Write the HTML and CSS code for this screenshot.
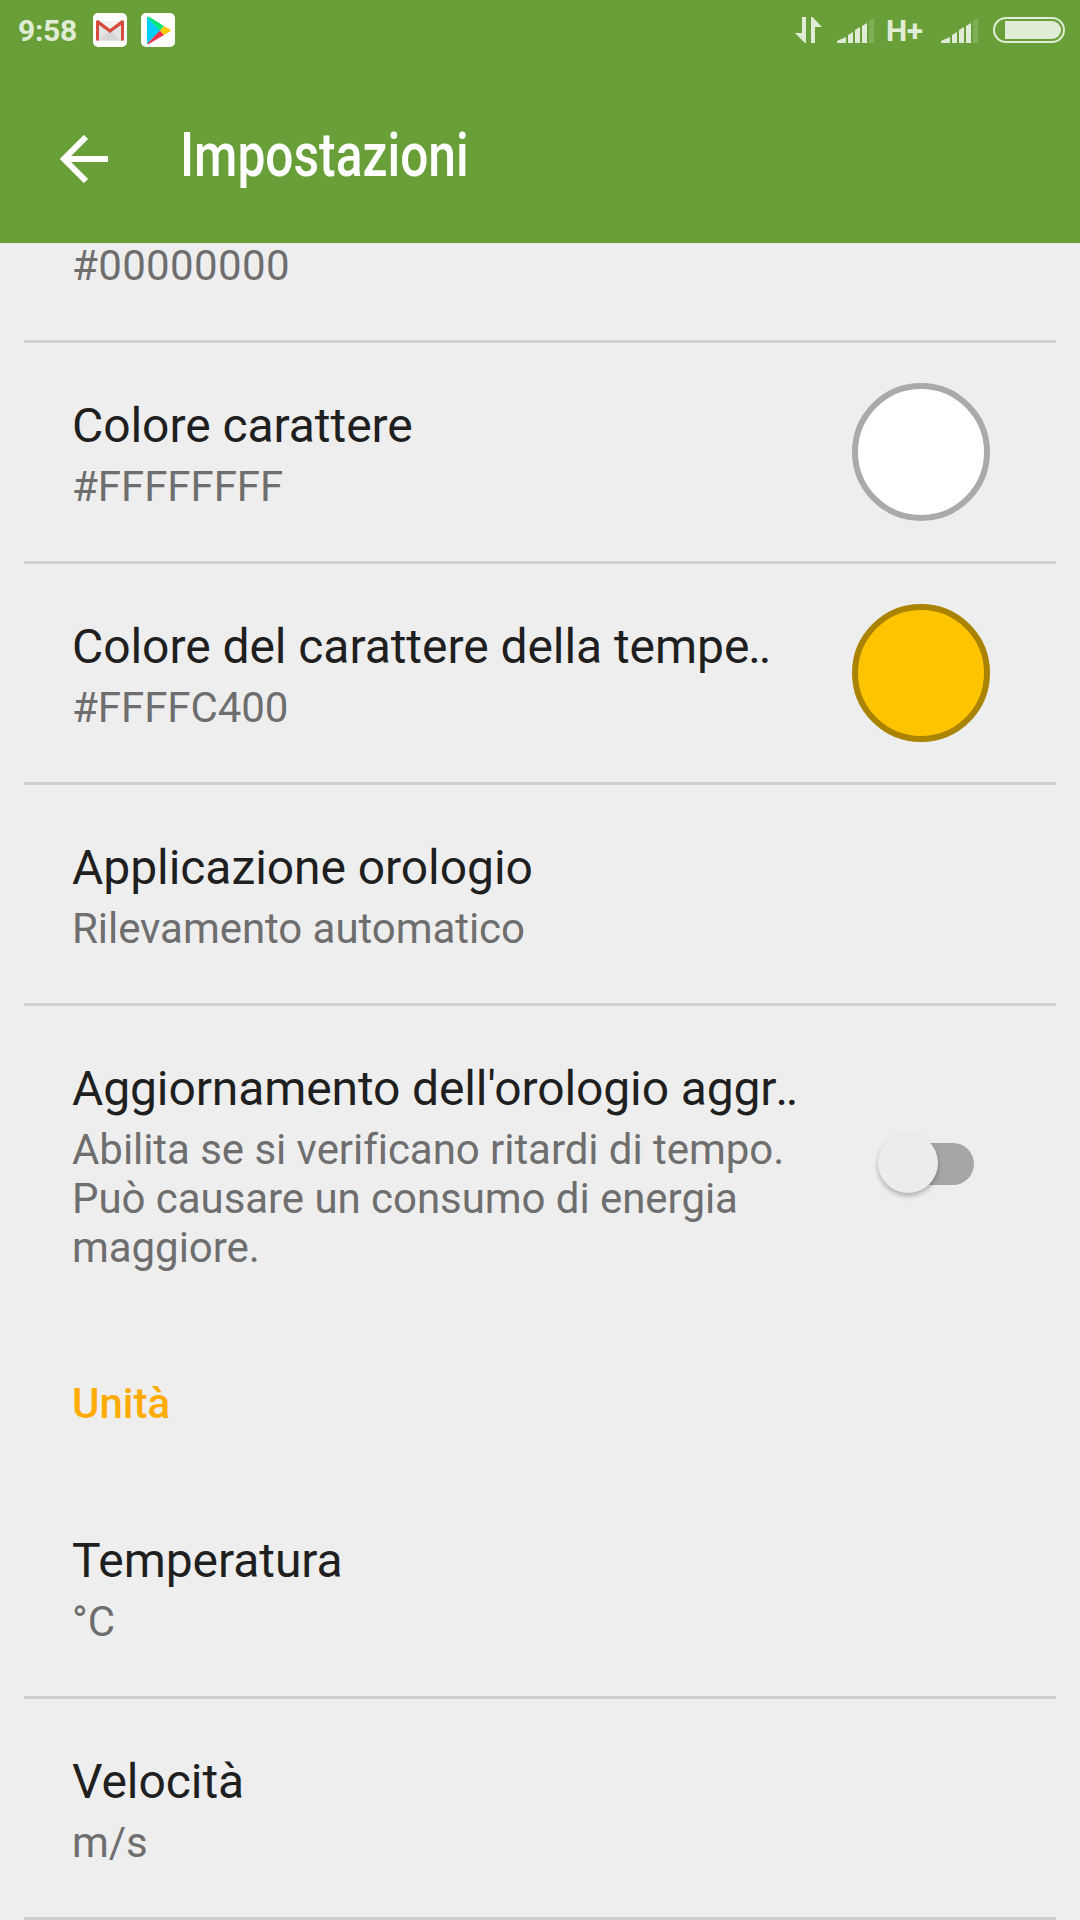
FILE: index.html
```html
<!DOCTYPE html>
<html lang="it">
<head>
    <meta charset="UTF-8">
    <meta name="viewport" content="width=device-width, initial-scale=1.0">
    <title>Impostazioni</title>
    <link rel="stylesheet" href="styles.css">
</head>
<body>
    <header class="app-header">
        <div class="status-bar">
            <div class="status-left">
                <span class="clock">9:58</span>
                <svg class="notification" viewBox="0 0 34 34">
                    <rect width="34" height="34" rx="5" fill="#fff"/>
                    <path d="M4 8h26v20H4z" fill="#e4e4e4"/>
                    <path d="M7 27l10-10 10 10z" fill="#d6d6d6"/>
                    <path d="M7 8h20L17 16z" fill="#f3f3f3"/>
                    <path d="M3 27.500V9q0-2 2-2l12 9 12-9q2 0 2 2v18.500h-3V12l-11 8L6 12v15.500z" fill="#d54b3d"/>
                </svg>
                <svg class="notification" viewBox="0 0 34 34">
                    <rect width="34" height="34" rx="5" fill="#fff"/>
                    <path d="M6 4v27l13.500-13.500z" fill="#00cdfb"/>
                    <path d="M6 4q1-.8 2.500 0L23 13l-4 4.500z" fill="#00e676"/>
                    <path d="M6 31q1 .5 2.500-.5L23 22l-4-4.500z" fill="#f0334b"/>
                    <path d="M23 13l6 3.500q1.500 1 0 2L23 22l-4-4.500z" fill="#ffc900"/>
                </svg>
            </div>
            <div class="status-right">
                <svg class="data-icon" viewBox="0 0 28 26">
                    <path d="M7 0h4v26h-1L0 16h7zM16 0h1.500L27 10h-7v16h-4z" fill="currentColor"/>
                </svg>
                <svg class="signal" viewBox="0 0 37 25">
                    <path d="M0 25v-2l9-4v6zM11 17l5-3v11h-5zM18 12l5-3v16h-5zM25 8l5-3v20h-5z" fill="currentColor"/>
                    <path d="M32 3l5-3v25h-5z" fill="currentColor" opacity=".2"/>
                </svg>
                <span class="network">H+</span>
                <svg class="signal" viewBox="0 0 37 25">
                    <path d="M0 25v-2l9-4v6zM11 17l5-3v11h-5zM18 12l5-3v16h-5zM25 8l5-3v20h-5z" fill="currentColor"/>
                    <path d="M32 3l5-3v25h-5z" fill="currentColor" opacity=".2"/>
                </svg>
                <svg class="battery" viewBox="0 0 72 26">
                    <rect x="1" y="1" width="70" height="24" rx="12" fill="none" stroke="currentColor" stroke-width="2"/>
                    <path d="M12 4h47a9 9 0 0 1 0 18H12z" fill="currentColor"/>
                </svg>
            </div>
        </div>
        <div class="toolbar">
            <svg class="back" viewBox="0 0 48 48">
                <path d="M26 2L4 24l22 22M4 24h44" fill="none" stroke="#fff" stroke-width="6"/>
            </svg>
            <h1>Impostazioni</h1>
        </div>
    </header>

    <main class="settings">
        <div class="setting setting-first">
            <div class="setting-text">
                <p>#00000000</p>
            </div>
        </div>
        <div class="setting">
            <div class="setting-text">
                <h2>Colore carattere</h2>
                <p>#FFFFFFFF</p>
            </div>
            <span class="swatch swatch-white"></span>
        </div>
        <div class="setting">
            <div class="setting-text">
                <h2>Colore del carattere della tempe<span class="dots">..</span></h2>
                <p>#FFFFC400</p>
            </div>
            <span class="swatch swatch-amber"></span>
        </div>
        <div class="setting">
            <div class="setting-text">
                <h2>Applicazione orologio</h2>
                <p>Rilevamento automatico</p>
            </div>
        </div>
        <div class="setting setting-last">
            <div class="setting-text">
                <h2>Aggiornamento dell'orologio aggr<span class="dots">..</span></h2>
                <p>Abilita se si verificano ritardi di tempo.<br>Può causare un consumo di energia<br>maggiore.</p>
            </div>
            <span class="switch"><span class="thumb"></span></span>
        </div>

        <h3 class="category">Unità</h3>

        <div class="setting">
            <div class="setting-text">
                <h2>Temperatura</h2>
                <p>°C</p>
            </div>
        </div>
        <div class="setting">
            <div class="setting-text">
                <h2>Velocità</h2>
                <p>m/s</p>
            </div>
        </div>
    </main>
</body>
</html>
```
FILE: styles.css
```css
:root {
    --primary-color: #689f38;
    --accent-color: #ffab00;
    --bg-color: #eeeeee;
    --text-color: #1f1f1f;
    --text-secondary: #6e6e6e;
    --divider-color: #d0d0d0;
    --status-color: #e1ecd7;
}

* {
    box-sizing: border-box;
}

body {
    margin: 0;
    height: 1920px;
    overflow: hidden;
    font-family: Roboto, sans-serif;
    background-color: var(--bg-color);
    color: var(--text-color);
}

h1, h2, h3, p {
    margin: 0;
    font-weight: 400;
}

svg {
    display: block;
}

.app-header {
    height: 243px;
    background-color: var(--primary-color);
}

.status-bar {
    height: 60px;
    padding: 0 15px 0 18px;
    display: flex;
    justify-content: space-between;
    align-items: center;
    color: var(--status-color);
}

.status-left,
.status-right {
    display: flex;
    align-items: center;
}

.clock {
    width: 75px;
    font-size: 30px;
    font-weight: 700;
    letter-spacing: -0.3px;
}

.notification {
    width: 34px;
    height: 34px;
    margin-right: 14px;
}

.data-icon {
    width: 28px;
    height: 26px;
    margin-right: 14px;
}

.signal {
    width: 37px;
    height: 25px;
}

.network {
    width: 38px;
    margin: 0 17px 0 12px;
    font-size: 30px;
    font-weight: 700;
    letter-spacing: -0.5px;
}

.battery {
    width: 72px;
    height: 26px;
    margin-left: 15px;
}

.toolbar {
    height: 183px;
    padding: 15px 60px 0;
    display: flex;
    align-items: flex-start;
}

.back {
    width: 48px;
    height: 48px;
    margin-top: 60px;
}

h1 {
    margin: 44px 0 0 72px;
    font-size: 61px;
    line-height: 72px;
    font-weight: 500;
    color: #fff;
    transform: scaleX(0.815);
    transform-origin: left;
}

.setting {
    min-height: 221px;
    margin: 0 24px;
    padding: 0 66px 0 48px;
    border-bottom: 3px solid var(--divider-color);
    display: flex;
    align-items: center;
    justify-content: space-between;
}

.setting-text {
    padding-top: 4px;
}

.setting-first {
    min-height: 100px;
    align-items: flex-start;
}

.setting-first .setting-text {
    padding-top: 0;
}

.setting-last {
    min-height: 316px;
    border-bottom: none;
}

h2 {
    font-size: 48px;
    line-height: 56px;
    letter-spacing: -0.06px;
    white-space: nowrap;
}

.dots {
    margin-left: -1px;
    letter-spacing: -2.3px;
}

.setting-last h2 {
    letter-spacing: -0.12px;
}

p {
    margin-top: 8px;
    font-size: 42px;
    line-height: 49px;
    letter-spacing: -0.05px;
    color: var(--text-secondary);
    white-space: nowrap;
}

.setting-first p {
    margin-top: -2px;
    letter-spacing: 0.35px;
}

.swatch {
    width: 138px;
    height: 138px;
    border: 6px solid;
    border-radius: 50%;
}

.swatch-white {
    background-color: #fff;
    border-color: #aaa;
}

.swatch-amber {
    background-color: #ffc400;
    border-color: #aa8300;
}

.switch {
    width: 88px;
    height: 42px;
    margin-right: 16px;
    display: flex;
    align-items: center;
    border-radius: 21px;
    background-color: #a6a6a6;
}

.thumb {
    width: 60px;
    height: 60px;
    margin: -2px 0 0 -8px;
    flex: none;
    border-radius: 50%;
    background-color: #ececec;
    box-shadow: 0 3px 5px rgba(0, 0, 0, 0.27);
}

.category {
    height: 156px;
    padding: 57px 72px 0;
    font-size: 42px;
    line-height: 49px;
    font-weight: 500;
    color: var(--accent-color);
}
```
